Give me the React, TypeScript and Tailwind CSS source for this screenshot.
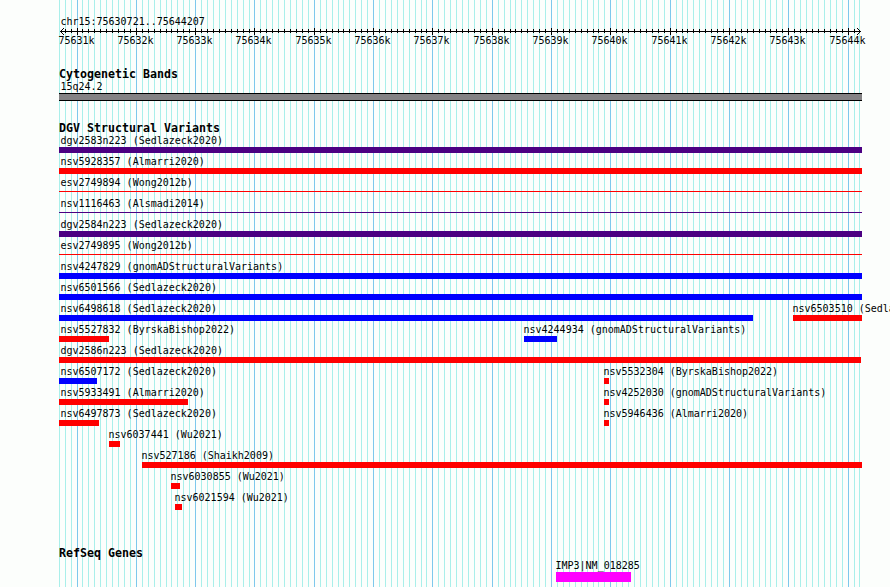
type Feature = {
  name: string;
  start: number;
  end: number;
  color: string;
  thin?: boolean;
};

const RED = "bg-[#ff0000]";
const BLUE = "bg-[#0000ff]";
const INDIGO = "bg-[#4b0082]";

// horizontal extent of the panel
const LEFT = 59;
const RIGHT = 862;

const variants: Feature[][] = [
  [{ name: "dgv2583n223 (Sedlazeck2020)", start: 59, end: 862, color: INDIGO }],
  [{ name: "nsv5928357 (Almarri2020)", start: 59, end: 862, color: RED }],
  [{ name: "esv2749894 (Wong2012b)", start: 59, end: 862, color: RED, thin: true }],
  [{ name: "nsv1116463 (Alsmadi2014)", start: 59, end: 862, color: INDIGO, thin: true }],
  [{ name: "dgv2584n223 (Sedlazeck2020)", start: 59, end: 862, color: INDIGO }],
  [{ name: "esv2749895 (Wong2012b)", start: 59, end: 862, color: RED, thin: true }],
  [{ name: "nsv4247829 (gnomADStructuralVariants)", start: 59, end: 862, color: BLUE }],
  [{ name: "nsv6501566 (Sedlazeck2020)", start: 59, end: 862, color: BLUE }],
  [
    { name: "nsv6498618 (Sedlazeck2020)", start: 59, end: 753, color: BLUE },
    { name: "nsv6503510 (Sedla", start: 793, end: 862, color: RED },
  ],
  [
    { name: "nsv5527832 (ByrskaBishop2022)", start: 59, end: 109, color: RED },
    { name: "nsv4244934 (gnomADStructuralVariants)", start: 524, end: 557, color: BLUE },
  ],
  [{ name: "dgv2586n223 (Sedlazeck2020)", start: 59, end: 861, color: RED }],
  [
    { name: "nsv6507172 (Sedlazeck2020)", start: 59, end: 97, color: BLUE },
    { name: "nsv5532304 (ByrskaBishop2022)", start: 604, end: 609, color: RED },
  ],
  [
    { name: "nsv5933491 (Almarri2020)", start: 59, end: 188, color: RED },
    { name: "nsv4252030 (gnomADStructuralVariants)", start: 604, end: 609, color: RED },
  ],
  [
    { name: "nsv6497873 (Sedlazeck2020)", start: 59, end: 99, color: RED },
    { name: "nsv5946436 (Almarri2020)", start: 604, end: 609, color: RED },
  ],
  [{ name: "nsv6037441 (Wu2021)", start: 109, end: 120, color: RED }],
  [{ name: "nsv527186 (Shaikh2009)", start: 142, end: 862, color: RED }],
  [{ name: "nsv6030855 (Wu2021)", start: 171, end: 180, color: RED }],
  [{ name: "nsv6021594 (Wu2021)", start: 175, end: 182, color: RED }],
];

// one tick per 100 bp, every tenth one is a major tick
const ticks = Array.from({ length: 136 }, (_, i) => {
  const k = i - 3;
  return { x: Math.floor(77.05 + k * 5.931), major: k % 10 === 0, label: `${75631 + k / 10}k` };
}).filter((t) => t.x < RIGHT);

function Grid() {
  return (
    <svg className="absolute inset-0" width="890" height="587" shapeRendering="crispEdges">
      {ticks.map((t) => (
        <rect key={t.x} x={t.x} y={0} width={1} height={587} fill={t.major ? "#7ec8ec" : "#a9efea"} />
      ))}
    </svg>
  );
}

function Ruler() {
  return (
    <svg className="block" width="890" height="21" viewBox="0 27 890 21">
      <g shapeRendering="crispEdges">
        <rect x={60} y={31} width={801} height={1} />
        {ticks.slice(1, -1).map((t) => (
          <rect key={t.x} x={t.x} y={t.major ? 28 : 29} width={1} height={t.major ? 7 : 4} />
        ))}
        {[1, 2, 3].map((d) => (
          <g key={d}>
            <rect x={60 + d} y={31 - d} width={1} height={1} />
            <rect x={60 + d} y={31 + d} width={1} height={1} />
            <rect x={860 - d} y={31 - d} width={1} height={1} />
            <rect x={860 - d} y={31 + d} width={1} height={1} />
          </g>
        ))}
      </g>
      {ticks
        .filter((t) => t.major)
        .map((t) => (
          <text key={t.x} x={t.x - 18.5} y={44} fontSize={10}>
            {t.label}
          </text>
        ))}
    </svg>
  );
}

function TrackTitle({ children }: { children: string }) {
  return <h2 className="h-[13px] pl-[59px] text-[11.63px] leading-[13px] font-bold">{children}</h2>;
}

function FeatureRow({ features }: { features: Feature[] }) {
  return (
    <div className="flex h-[21px]">
      {features.map((f, i) => {
        const prev = i > 0 ? features[i - 1].end : 0;
        return (
          <div key={f.name} className="shrink-0" style={{ marginLeft: f.start - prev, width: f.end - f.start }}>
            <div className={`h-[15px] pt-px leading-[15px] ${f.start === LEFT ? "ml-[1.4px]" : "-ml-[0.5px]"}`}>
              {f.name}
            </div>
            <div className={f.thin ? `mt-[2px] h-px ${f.color}` : `h-[6px] ${f.color}`} />
          </div>
        );
      })}
    </div>
  );
}

export default function App() {
  return (
    <div className="relative h-[587px] w-[890px] overflow-hidden bg-[#fcfefc] font-['DejaVu_Sans_Mono',monospace] text-[10px] whitespace-pre text-black">
      <Grid />
      <div className="relative">
        <div className="h-[27px] pt-[15px] pl-[60.4px] leading-[14px]">chr15:75630721..75644207</div>
        <Ruler />

        <section className="pt-[20px]">
          <TrackTitle>Cytogenetic Bands</TrackTitle>
          <div className="h-[12px] pl-[60.4px] leading-[12px]">15q24.2</div>
          <div
            className="h-[8px] border-y border-black bg-[#848284]"
            style={{ marginLeft: LEFT, width: RIGHT - LEFT }}
          />
        </section>

        <section className="pt-[21px]">
          <TrackTitle>DGV Structural Variants</TrackTitle>
          <div className="-mt-[3px]">
            {variants.map((row) => (
              <FeatureRow key={row[0].name} features={row} />
            ))}
          </div>
        </section>

        <section className="pt-[37px]">
          <TrackTitle>RefSeq Genes</TrackTitle>
          <div className="ml-[556px] w-[75px]">
            <div className="-ml-[0.5px] h-[12px] leading-[12px]">IMP3|NM_018285</div>
            <div className="h-[10px] bg-[#ff00ff]" />
          </div>
        </section>
      </div>
    </div>
  );
}
